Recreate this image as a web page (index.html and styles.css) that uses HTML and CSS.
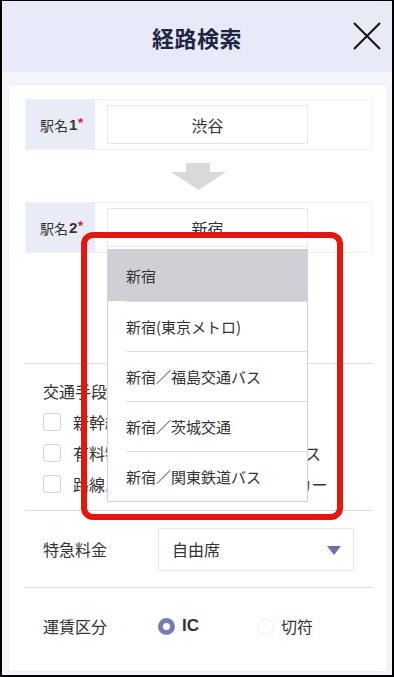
FILE: index.html
```html
<!DOCTYPE html>
<html lang="ja">
<head>
    <meta charset="UTF-8">
    <meta name="viewport" content="width=device-width, initial-scale=1.0">
    <title>経路検索</title>
    <link rel="stylesheet" href="styles.css">
</head>
<body>

<div class="screen">
    <header class="header">
        <span></span>
        <h1 class="title">経路検索</h1>
        <button class="close-btn" aria-label="閉じる">
            <svg width="28" height="28" viewBox="0 0 28 28">
                <path d="M1 1 L27 27 M27 1 L1 27" stroke="#111" stroke-width="2" fill="none"/>
            </svg>
        </button>
    </header>

    <main class="main">
        <div class="card">
            <div class="station-row">
                <div class="station-label">駅名<b>1</b><span class="req">*</span></div>
                <div class="station-input">渋谷</div>
            </div>

            <div class="arrow">
                <svg width="55" height="27" viewBox="0 0 55 27">
                    <polygon points="15,0 39,0 39,9 55,9 27.5,27 0,9 15,9" fill="#d9d9d9"/>
                </svg>
            </div>

            <div class="station-row">
                <div class="station-label">駅名<b>2</b><span class="req">*</span></div>
                <div class="station-input">
                    新宿
                    <ul class="suggest">
                        <li class="option active">新宿</li>
                        <li class="option">新宿(東京メトロ)</li>
                        <li class="option">新宿／福島交通バス</li>
                        <li class="option">新宿／茨城交通</li>
                        <li class="option">新宿／関東鉄道バス</li>
                    </ul>
                </div>
            </div>

            <div class="section transport">
                <div class="section-title">交通手段</div>
                <label class="check-row"><span class="checkbox"></span>新幹線</label>
                <label class="check-row"><span class="checkbox"></span>有料特急（新幹線以外）・高速バス</label>
                <label class="check-row"><span class="checkbox"></span>路線バス・フェリー・ケーブルカー</label>
            </div>

            <div class="section form-row">
                <div class="row-label">特急料金</div>
                <div class="select">
                    <span>自由席</span>
                    <span class="caret"></span>
                </div>
            </div>

            <div class="section form-row">
                <div class="row-label">運賃区分</div>
                <div class="radios">
                    <label class="radio-item"><span class="radio checked"></span><b>IC</b></label>
                    <label class="radio-item"><span class="radio"></span>切符</label>
                </div>
            </div>

            <div class="highlight"></div>
        </div>
    </main>
</div>

</body>
</html>
```

FILE: styles.css
```css
* {
    box-sizing: border-box;
}
body {
    margin: 0;
    font-family: "Noto Sans CJK JP", "Noto Sans", sans-serif;
    color: #333;
}
.screen {
    width: 394px;
    height: 677px;
    border: 2px solid #000;
    border-top-width: 1px;
    background: #f4f5fa;
    display: flex;
    flex-direction: column;
    overflow: hidden;
}
.header {
    height: 71px;
    flex-shrink: 0;
    background: #e8ebf7;
    display: grid;
    grid-template-columns: 1fr auto 1fr;
    align-items: center;
    padding: 0 11px;
}
.title {
    margin: 0;
    font-size: 22px;
    font-weight: bold;
    color: #1d2545;
    letter-spacing: 0.5px;
}
.close-btn {
    justify-self: end;
    background: none;
    border: none;
    padding: 0;
    width: 28px;
    height: 28px;
    margin-top: -1px;
}
.close-btn svg {
    display: block;
}
.main {
    flex: 1;
    display: flex;
    padding: 12px 4px 3px 6px;
}
.card {
    position: relative;
    flex: 1;
    background: #fff;
    border: 1px solid #eceef5;
    padding: 14px 15px 0 16px;
}
.station-row {
    display: flex;
    align-items: center;
    height: 51px;
    border: 1px solid #eef0f6;
}
.station-label {
    width: 69px;
    height: 100%;
    background: #e9ebf7;
    display: flex;
    align-items: center;
    padding-left: 14px;
    font-size: 14px;
    color: #333;
}
.station-label b {
    font-family: "Liberation Sans", Arial, sans-serif;
    font-size: 15px;
    margin-left: 1px;
}
.req {
    color: #e02020;
    font-weight: bold;
    font-size: 13px;
    margin-top: -5px;
}
.station-input {
    position: relative;
    margin-left: 12px;
    width: 201px;
    height: 39px;
    border: 1px solid #e4e7f1;
    display: flex;
    align-items: center;
    justify-content: center;
    font-size: 16px;
    color: #333;
}
.arrow {
    display: flex;
    justify-content: center;
    padding: 13px 0 12px;
    height: 52px;
}
.arrow svg {
    display: block;
}
.suggest {
    position: absolute;
    top: calc(100% + 3px);
    left: -1px;
    width: 201px;
    margin: 0;
    padding: 0;
    list-style: none;
    background: #fff;
    border: 1px solid #c6d3ef;
    z-index: 2;
}
.option {
    height: 50px;
    display: flex;
    align-items: center;
    padding-left: 18px;
    font-size: 15px;
    color: #333;
}
.option.active {
    background: #d0d0d4;
    height: 51px;
}
.option + .option {
    background-image: linear-gradient(#dedede, #dedede);
    background-size: calc(100% - 18px) 1px;
    background-position: right top;
    background-repeat: no-repeat;
}
.section {
    border-top: 1px solid #dddddd;
}
.transport {
    margin-top: 110px;
    padding: 16px 0 11px 18px;
}
.section-title {
    font-size: 16px;
    line-height: 22px;
    margin-bottom: 4px;
}
.check-row {
    display: flex;
    align-items: center;
    gap: 12px;
    height: 31px;
    font-size: 16px;
    white-space: nowrap;
}
.checkbox {
    width: 18px;
    height: 18px;
    flex-shrink: 0;
    border: 1px solid #d3d3d3;
    border-radius: 3px;
}
.form-row {
    display: flex;
    align-items: center;
    height: 77px;
    padding-left: 18px;
}
.form-row:last-of-type {
    border-bottom: 1px solid #dddddd;
}
.row-label {
    width: 115px;
    font-size: 16px;
}
.select {
    width: 196px;
    height: 43px;
    border: 1px solid #e6e7ee;
    display: flex;
    align-items: center;
    justify-content: space-between;
    padding: 0 12px 0 13px;
    font-size: 16px;
}
.caret {
    width: 0;
    height: 0;
    border-left: 7px solid transparent;
    border-right: 7px solid transparent;
    border-top: 9px solid #6b72a8;
    margin-top: 2px;
}
.radios {
    display: flex;
    align-items: center;
}
.radio-item {
    display: flex;
    align-items: center;
    gap: 7px;
    font-size: 16px;
    width: 99px;
}
.radio-item b {
    font-family: "Liberation Sans", Arial, sans-serif;
    font-size: 17px;
}
.radio {
    width: 17px;
    height: 17px;
    border-radius: 50%;
    border: 1px solid #ececf0;
    background: #fff;
}
.radio.checked {
    border: 5.5px solid #777db2;
}
.highlight {
    position: absolute;
    left: 72px;
    top: 147px;
    width: 262px;
    height: 288px;
    border: 6px solid #e4170e;
    border-radius: 12px;
    z-index: 3;
    pointer-events: none;
}
```
